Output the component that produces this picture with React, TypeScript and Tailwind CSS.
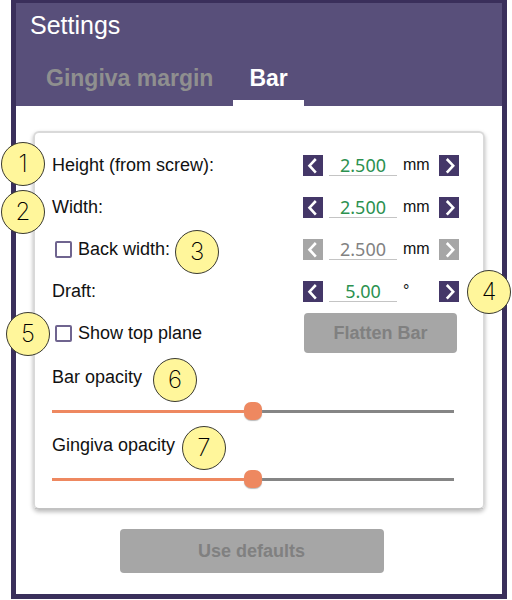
import { useState } from "react";
import type { ReactNode } from "react";
import clsx from "clsx";

function Marker({ children, className }: { children: ReactNode; className: string }) {
    return (
        <span
            className={clsx(
                "absolute z-10 flex size-11 items-center justify-center rounded-full border border-[#3a3a30] bg-[#fff69b] font-['Inter',sans-serif] text-2xl font-extralight text-black",
                className
            )}
        >
            {children}
        </span>
    );
}

function Arrow({ back = false, disabled = false, label, onClick }: { back?: boolean; disabled?: boolean; label: string; onClick: () => void }) {
    return (
        <button
            type="button"
            aria-label={label}
            disabled={disabled}
            onClick={onClick}
            className="flex h-[21px] w-5 items-center justify-center bg-[#443768] text-white disabled:bg-[#a6a6a6]"
        >
            <svg viewBox="0 0 20 21" className="h-full w-full" fill="none" stroke="currentColor" strokeWidth="2.6">
                <path d={back ? "M12.8 4 L6.5 10.7 L12.8 17.6" : "M7.8 4 L14.2 10.7 L7.8 17.6"} />
            </svg>
        </button>
    );
}

type StepperProps = {
    id: string;
    name: string;
    start: number;
    step: number;
    digits: number;
    unit: string;
    disabled?: boolean;
};

function Stepper({ id, name, start, step, digits, unit, disabled = false }: StepperProps) {
    const [value, setValue] = useState(start.toFixed(digits));
    const move = (by: number) => setValue((Number(value) + by).toFixed(digits));

    return (
        <div className="ml-auto flex items-center">
            <Arrow back label={`Decrease ${name}`} disabled={disabled} onClick={() => move(-step)} />
            <input
                id={id}
                type="text"
                aria-label={name}
                value={value}
                disabled={disabled}
                onChange={(e) => setValue(e.target.value)}
                className="ml-1.5 h-[22px] w-[68px] border-b border-[#c4c4c4] text-center font-['Noto_Sans',sans-serif] text-lg leading-5 text-[#2c9150] disabled:text-[#828282]"
            />
            <span className="ml-1.5 w-9 text-base">{unit}</span>
            <Arrow label={`Increase ${name}`} disabled={disabled} onClick={() => move(step)} />
        </div>
    );
}

function Check({ id, label, checked, onChange }: { id: string; label: string; checked: boolean; onChange: (on: boolean) => void }) {
    return (
        <div className="flex items-center gap-1.5 pl-[3px]">
            <input
                id={id}
                type="checkbox"
                checked={checked}
                onChange={(e) => onChange(e.target.checked)}
                className="size-[17px] appearance-none rounded-xs border-2 border-[#6f648f] bg-white checked:bg-[#443768]"
            />
            <label htmlFor={id}>{label}</label>
        </div>
    );
}

function OpacitySlider({ id, label, marker }: { id: string; label: string; marker: ReactNode }) {
    const [value, setValue] = useState(50);

    return (
        <div>
            <div className="relative flex h-[46px] items-center">
                <label htmlFor={id}>{label}</label>
                {marker}
            </div>
            <div className="mr-[5px] flex h-[22px] items-center">
                <input
                    id={id}
                    type="range"
                    min={0}
                    max={100}
                    value={value}
                    onChange={(e) => setValue(Number(e.target.value))}
                    style={{ backgroundImage: `linear-gradient(to right, #ee8860 ${value}%, #858585 ${value}%)` }}
                    className="h-[3px] w-full appearance-none [&::-webkit-slider-thumb]:size-[18px] [&::-webkit-slider-thumb]:appearance-none [&::-webkit-slider-thumb]:rounded-[7px] [&::-webkit-slider-thumb]:bg-[#ee8860] [&::-webkit-slider-thumb]:shadow-[0_1px_1px_#bbbbbb]"
                />
            </div>
        </div>
    );
}

export default function App() {
    const [backWidth, setBackWidth] = useState(false);
    const [topPlane, setTopPlane] = useState(false);

    return (
        <div className="bg-white pr-[5px] pl-[11px] font-['Liberation_Sans',Arial,sans-serif] text-lg text-[#111111]">
            <main className="border-x-[5px] border-t-[3px] border-b-[5px] border-[#3a2f5b] pb-[21px]">
                {/* Title and tabs */}
                <header className="bg-[#584f7a] pt-1">
                    <h1 className="pl-3.5 text-[25px] leading-9 text-white">Settings</h1>
                    <nav role="tablist" className="mt-4 flex pl-[18px] text-[23px] leading-7 font-bold">
                        <button type="button" role="tab" aria-selected="false" className="h-[47px] px-3 pb-[9px] text-[#8f8f8f]">
                            Gingiva margin
                        </button>
                        <button type="button" role="tab" aria-selected="true" className="ml-2 h-[47px] border-b-[6px] border-white px-4 pb-[3px] text-white">
                            Bar
                        </button>
                    </nav>
                </header>

                <section className="mx-[17px] mt-[25px] rounded-md border-2 border-[#d9d9d9] border-b-[#c2c2c2] pt-[11px] pr-6 pb-[18px] pl-[17px] shadow-[0_2px_4px_#bcbcbc]">
                    <div className="relative flex h-[42px] items-center">
                        <label htmlFor="height">Height (from screw):</label>
                        <Marker className="top-[-2px] -left-[51px]">1</Marker>
                        <Stepper id="height" name="Height (from screw)" start={2.5} step={0.1} digits={3} unit="mm" />
                    </div>
                    <div className="relative flex h-[42px] items-center">
                        <label htmlFor="width">Width:</label>
                        <Marker className="top-1 -left-[51px]">2</Marker>
                        <Stepper id="width" name="Width" start={2.5} step={0.1} digits={3} unit="mm" />
                    </div>
                    <div className="relative flex h-[42px] items-center">
                        <Check id="use-back-width" label="Back width:" checked={backWidth} onChange={setBackWidth} />
                        <Marker className="top-0.5 left-[123px]">3</Marker>
                        <Stepper id="back-width" name="Back width" start={2.5} step={0.1} digits={3} unit="mm" disabled={!backWidth} />
                    </div>
                    <div className="relative flex h-[42px] items-center">
                        <label htmlFor="draft">Draft:</label>
                        <Stepper id="draft" name="Draft" start={5} step={0.5} digits={2} unit="°" />
                        <Marker className="top-0 -right-[52px]">4</Marker>
                    </div>
                    <div className="relative flex h-[42px] items-center">
                        <Marker className="top-0 -left-[46px]">5</Marker>
                        <Check id="top-plane" label="Show top plane" checked={topPlane} onChange={setTopPlane} />
                        <button type="button" disabled className="mr-0.5 ml-auto h-10 w-[153px] rounded-sm bg-[#a6a6a6] font-bold text-[#808080]">
                            Flatten Bar
                        </button>
                    </div>

                    <OpacitySlider id="bar-opacity" label="Bar opacity" marker={<Marker className="top-1 left-[101px]">6</Marker>} />
                    <OpacitySlider id="gingiva-opacity" label="Gingiva opacity" marker={<Marker className="top-1 left-[130px]">7</Marker>} />
                </section>

                <div className="mt-[19px] flex justify-center pr-[15px]">
                    <button type="button" disabled className="h-11 w-[264px] rounded-sm bg-[#a6a6a6] font-bold text-[#808080]">
                        Use defaults
                    </button>
                </div>
            </main>
        </div>
    );
}
